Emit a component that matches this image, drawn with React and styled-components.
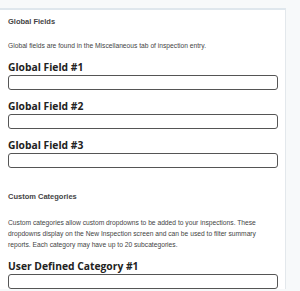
import React from 'react';
import styled, { createGlobalStyle } from 'styled-components';

const Global = createGlobalStyle`
  html, body { margin: 0; padding: 0; background: #f7f9fa; }
  body { font-family: "Liberation Sans", Arial, sans-serif; }
`;

const Page = styled.div`
  width: 300px;
  height: 291px;
  overflow: hidden;
  padding-top: 8px;
  box-sizing: border-box;
`;

const Panel = styled.div`
  width: 286px;
  box-sizing: border-box;
  background: #fff;
  border-top: 2px solid #dfe7ed;
  border-right: 1px solid #e3e8ec;
  padding: 7px 8px 0 8px;
`;

const Heading = styled.h3`
  margin: ${p => p.$top || 0}px 0 0 0;
  font-size: 7.5px;
  font-weight: bold;
  color: #444;
  line-height: 10px;
`;

const Note = styled.p`
  margin: ${p => p.$top || 13}px 0 0 0;
  font-size: 6.7px;
  color: #444;
  line-height: 11px;
`;

const Field = styled.div`
  margin-top: ${p => p.$top || 0}px;
  display: flex;
  flex-direction: column;
`;

const Label = styled.label`
  font-family: "Open Sans", "DejaVu Sans", sans-serif;
  font-weight: bold;
  font-size: 10.3px;
  color: #222;
  line-height: 12px;
`;

const Input = styled.input`
  width: 270px;
  height: 15px;
  box-sizing: border-box;
  border: 1.5px solid #555;
  border-radius: 3px;
  margin: 2px 0 0 0;
  padding: 0 4px;
  background: #fff;
`;

export default function App() {
  return (
    <Page>
      <Global />
      <Panel>
        <Heading>Global Fields</Heading>
        <Note>Global fields are found in the Miscellaneous tab of inspection entry.</Note>
        <Field $top={10}>
          <Label>Global Field #1</Label>
          <Input type="text" />
        </Field>
        <Field $top={10}>
          <Label>Global Field #2</Label>
          <Input type="text" />
        </Field>
        <Field $top={10}>
          <Label>Global Field #3</Label>
          <Input type="text" />
        </Field>
        <Heading $top={24}>Custom Categories</Heading>
        <Note $top={15}>
          Custom categories allow custom dropdowns to be added to your inspections. These dropdowns display on the New Inspection screen and can be used to filter summary reports. Each category may have up to 20 subcategories.
        </Note>
        <Field $top={10}>
          <Label>User Defined Category #1</Label>
          <Input type="text" />
        </Field>
      </Panel>
    </Page>
  );
}
